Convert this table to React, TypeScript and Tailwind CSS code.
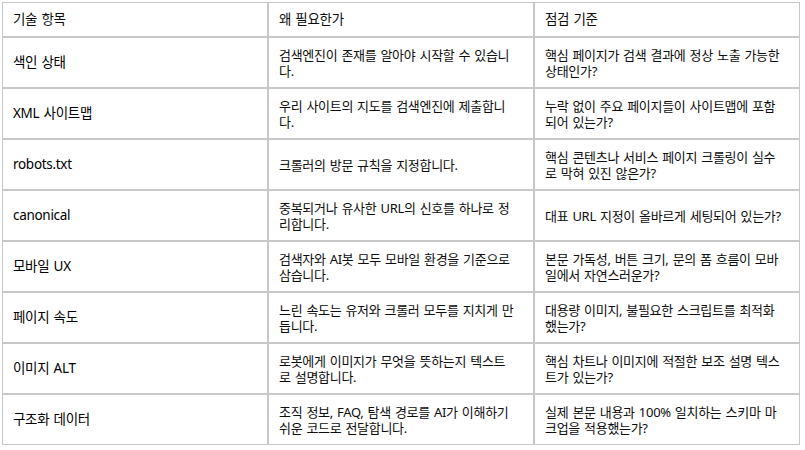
import React from "react";

type Row = { name: string; why: string[]; check: string[] };

const rows: Row[] = [
  {
    name: "색인 상태",
    why: ["검색엔진이 존재를 알아야 시작할 수 있습니", "다."],
    check: ["핵심 페이지가 검색 결과에 정상 노출 가능한", "상태인가?"],
  },
  {
    name: "XML 사이트맵",
    why: ["우리 사이트의 지도를 검색엔진에 제출합니", "다."],
    check: ["누락 없이 주요 페이지들이 사이트맵에 포함", "되어 있는가?"],
  },
  {
    name: "robots.txt",
    why: ["크롤러의 방문 규칙을 지정합니다."],
    check: ["핵심 콘텐츠나 서비스 페이지 크롤링이 실수", "로 막혀 있진 않은가?"],
  },
  {
    name: "canonical",
    why: ["중복되거나 유사한 URL의 신호를 하나로 정", "리합니다."],
    check: ["대표 URL 지정이 올바르게 세팅되어 있는가?"],
  },
  {
    name: "모바일 UX",
    why: ["검색자와 AI봇 모두 모바일 환경을 기준으로", "삼습니다."],
    check: ["본문 가독성, 버튼 크기, 문의 폼 흐름이 모바", "일에서 자연스러운가?"],
  },
  {
    name: "페이지 속도",
    why: ["느린 속도는 유저와 크롤러 모두를 지치게 만", "듭니다."],
    check: ["대용량 이미지, 불필요한 스크립트를 최적화", "했는가?"],
  },
  {
    name: "이미지 ALT",
    why: ["로봇에게 이미지가 무엇을 뜻하는지 텍스트", "로 설명합니다."],
    check: ["핵심 차트나 이미지에 적절한 보조 설명 텍스", "트가 있는가?"],
  },
  {
    name: "구조화 데이터",
    why: ["조직 정보, FAQ, 탐색 경로를 AI가 이해하기", "쉬운 코드로 전달합니다."],
    check: ["실제 본문 내용과 100% 일치하는 스키마 마", "크업을 적용했는가?"],
  },
];

function Lines({ lines }: { lines: string[] }) {
  return (
    <div className="flex flex-col leading-[16px]">
      {lines.map((l, i) => (
        <span key={i} className="whitespace-nowrap">
          {l}
        </span>
      ))}
    </div>
  );
}

export default function App() {
  return (
    <div
      className="w-[805px] h-[450px] bg-white pl-[2px] pt-[2px] text-[13px] text-[#0d0d0d] tracking-[-0.3px] [word-spacing:1px]"
      style={{ fontFamily: '"Noto Sans", "Noto Sans CJK KR", sans-serif' }}
    >
      <div className="w-[798px] border border-[#c8c8c8] bg-[#c8c8c8] grid grid-cols-3 gap-[2px]">
        <div className="h-[33px] bg-white flex items-center px-[10px] text-[13.5px]">기술 항목</div>
        <div className="h-[33px] bg-white flex items-center px-[10px] text-[13.5px]">왜 필요한가</div>
        <div className="h-[33px] bg-white flex items-center px-[10px] text-[13.5px]">점검 기준</div>
        {rows.map((r) => (
          <React.Fragment key={r.name}>
            <div className="h-[49px] bg-white flex items-center px-[10px] text-[13.5px] text-black">
              {r.name}
            </div>
            <div className="h-[49px] bg-white flex items-center px-[10px]">
              <Lines lines={r.why} />
            </div>
            <div className="h-[49px] bg-white flex items-center px-[10px]">
              <Lines lines={r.check} />
            </div>
          </React.Fragment>
        ))}
      </div>
    </div>
  );
}
